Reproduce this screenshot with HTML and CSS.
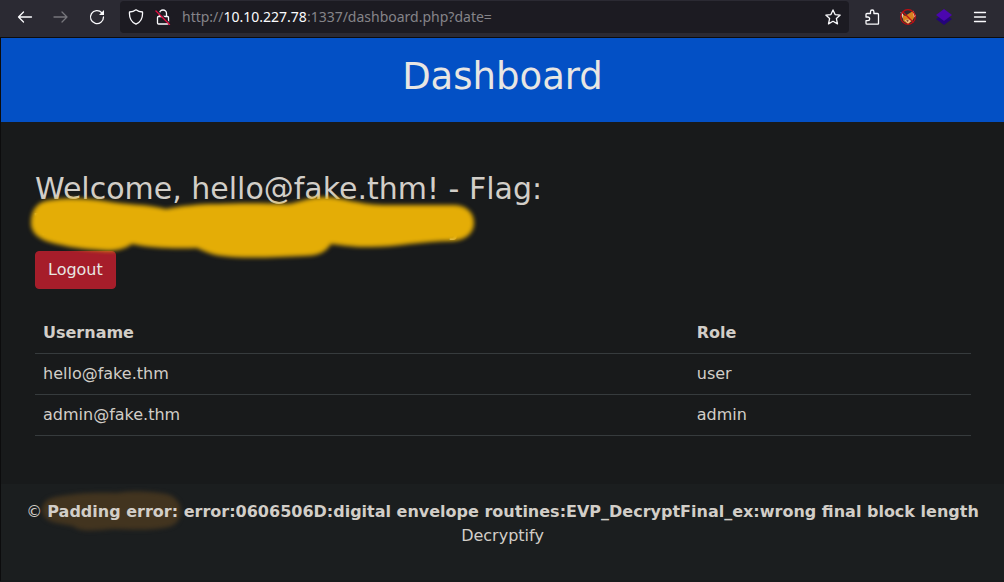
FILE: index.html
```html
<!DOCTYPE html>
<html lang="en">
<head>
<meta charset="utf-8">
<meta name="viewport" content="width=device-width, initial-scale=1">
<title>Dashboard</title>
<link rel="stylesheet" href="styles.css">
</head>
<body>
<nav class="toolbar" aria-label="Browser toolbar">
  <div class="nav-buttons">
    <button class="tool" aria-label="Back"><svg viewBox="0 0 16 16"><path d="M14.500 8H1.500M6.500 3 1.500 8l5 5"/></svg></button>
    <button class="tool dim" aria-label="Forward" disabled><svg viewBox="0 0 16 16"><path d="M1 8h13M9 3l5 5-5 5"/></svg></button>
    <button class="tool" aria-label="Reload"><svg viewBox="0 0 16 16"><path d="M12.800 3.700A6.500 6.500 0 1 0 14.500 8"/><path class="solid" d="M15 1v5H10z"/></svg></button>
  </div>
  <div class="urlbar">
    <button class="tool" aria-label="Tracking protection"><svg viewBox="0 0 16 16"><path d="M8 .8c2 1.600 4.200 2.100 6.500 2.200.4 5.500-1.700 10-6.500 12.200C3.200 13 1.100 8.500 1.500 3 3.800 2.900 6 2.400 8 .8z"/></svg></button>
    <button class="tool" aria-label="Connection is not secure"><svg viewBox="0 0 16 16"><path d="M4.500 7.500V4.500a3.500 3.500 0 0 1 7 0v3M3.500 7.500h9a1 1 0 0 1 1 1v5.500a1 1 0 0 1-1 1h-9a1 1 0 0 1-1-1V8.500a1 1 0 0 1 1-1z"/><path class="mask" d="M2 1.500 15 14.500"/><path class="slash" d="M1 2 14.500 15.500"/></svg></button>
    <div class="address">http://<span class="host">10.10.227.78</span>:1337/dashboard.php?date=</div>
    <button class="tool" aria-label="Bookmark this page"><svg viewBox="0 0 16 16"><path d="m8 .9 2.100 4.700 5.100.5-3.800 3.500 1.100 5.300L8 12.300l-4.500 2.600 1.100-5.300L.8 6.100l5.100-.5z"/></svg></button>
  </div>
  <div class="extensions">
    <button class="tool" aria-label="Extensions"><svg viewBox="0 0 16 16"><path d="M2 8V5.500a1 1 0 0 1 1-1h3.500V2.700a1.700 1.700 0 0 1 3.400 0v1.800H13.500a1 1 0 0 1 1 1v9.200a.5.500 0 0 1-.5.500H3a1 1 0 0 1-1-1v-2.500h1.800a1.800 1.800 0 0 0 0-3.700H2z"/></svg></button>
    <button class="tool" aria-label="FoxyProxy"><svg viewBox="0 0 16 16"><path fill="#d9801f" stroke="none" d="M1.500 4 5 7l4-2.500L13 2l1.800 5-2.300 4.500L8 15l-4.500-3z"/><path fill="#f3e7d8" stroke="none" d="M.5 3 3 5l-.5 4.500zM13 1.500 16 7l-2 1.500z"/><path fill="#efc08a" stroke="none" d="M4.500 11l4-.5 3 1L8 14.800z"/><path fill="#663018" stroke="none" d="M6 11.500 8.500 11 8 13z"/><circle cx="8" cy="8" r="7.300" stroke="#c60c10" stroke-width="1.200"/><path stroke="#b71215" stroke-width="1.200" d="m3 3 10 10"/></svg></button>
    <button class="tool" aria-label="Wappalyzer"><svg viewBox="0 0 16 16"><path fill="#24047b" stroke="none" d="M0 10 8 5l8 5-8 6z"/><path fill="#4b06ae" stroke="none" d="m8 0 8 6-8 6-8-6z"/></svg></button>
    <button class="tool" aria-label="Menu"><svg viewBox="0 0 16 16"><path d="M2.500 3.500h11M2.500 8h11M2.500 12.500h11"/></svg></button>
  </div>
</nav>
<div class="page">
  <header class="banner"><h1>Dashboard</h1></header>
  <main class="content">
    <h2>Welcome, hello@fake.thm! - Flag:
      <span class="flag"><span>T</span><span>}</span>
        <svg class="redaction" viewBox="0 0 460 80" aria-hidden="true"><path fill="#e4ad06" d="M8 31C8 17 15 9 28 8 50 5 67 7 82 9c20 4 43 3 61 8 15-3 31-5 52-5 21-1 43-1 70 0 13-2 20-7 38-7 20 1 35 9 68 8h59c13 0 21 7 21 18 0 10-8 17-21 18-32 0-62 7-88 6-14 0-23-2-34-3-5 8-12 12-27 12-25 1-60 3-82 0-11-1-18-5-25-8-22 1-48 0-65-4-8 6-20 8-34 6-20-1-40-5-52-9-9-4-15-9-15-18z"/></svg>
      </span>
    </h2>
    <button class="logout">Logout</button>
    <table>
      <thead><tr><th scope="col">Username</th><th scope="col">Role</th></tr></thead>
      <tbody>
        <tr><td>hello@fake.thm</td><td>user</td></tr>
        <tr><td>admin@fake.thm</td><td>admin</td></tr>
      </tbody>
    </table>
  </main>
  <footer class="footer">
    <p>© <strong><span class="marked"><svg class="smear" viewBox="0 0 144 44" aria-hidden="true"><path fill="#42341f" d="M16 8C35 4 58 3 78 4c19-3 38-1 49 1 19 4 20 29 2 33-17 4-40 2-57 2-13 1-30 4-38-3C18 34 4 34 3 21 4 12 9 10 16 8z"/></svg><span class="label">Padding error:</span></span> error:0606506D:digital envelope routines:EVP_DecryptFinal_ex:wrong final block length</strong><br>Decryptify</p>
  </footer>
</div>
</body>
</html>
```
FILE: styles.css
```css
* {
  box-sizing: border-box;
}

body {
  margin: 0;
  min-height: 100vh;
  background: #181a1b;
  color: #d2cec8;
  font: 16px/24px "DejaVu Sans", sans-serif;
}

button {
  font: inherit;
  color: inherit;
  cursor: pointer;
}

.toolbar {
  display: flex;
  align-items: center;
  gap: 15px;
  height: 38px;
  padding: 0 16px 3px 17px;
  background: #2b2a33;
  border-bottom: 1px solid #0c0c0d;
}

.nav-buttons,
.extensions {
  display: flex;
  gap: 20px;
}

.tool {
  display: block;
  flex: none;
  width: 16px;
  height: 16px;
  padding: 0;
  border: 0;
  background: none;
  color: #fbfbfe;
}

.tool svg {
  display: block;
  width: 16px;
  height: 16px;
  fill: none;
  stroke: currentColor;
  stroke-width: 1.3;
  stroke-linejoin: round;
  stroke-linecap: round;
}

.dim {
  color: #77767c;
}

.tool .solid {
  fill: currentColor;
  stroke: none;
}

.tool .mask {
  stroke: #1c1b22;
}

.tool .slash {
  stroke: #e80c43;
}

.urlbar {
  flex: 1;
  display: flex;
  align-items: center;
  gap: 11px;
  min-width: 0;
  height: 32px;
  padding: 0 8px;
  border-radius: 4px;
  background: #1c1b22;
}

.address {
  flex: 1;
  overflow: hidden;
  white-space: nowrap;
  color: #858489;
  font: 14px/24px "Noto Sans", sans-serif;
}

.host {
  color: #fbfbfe;
}

.page {
  border-left: 1px solid #0c0c0d;
}

.banner {
  padding: 16px 16px 22px;
  background: #0350c5;
  color: #e8e6e3;
  text-align: center;
}

h1 {
  margin: 0;
  font-size: 37px;
  font-weight: 400;
  line-height: 46px;
}

.content {
  padding: 49px 33px 48px 34px;
}

h2 {
  margin: 0 0 8px;
  font-size: 30px;
  font-weight: 400;
  line-height: 36px;
}

.flag {
  position: relative;
  display: flex;
  justify-content: space-between;
  width: 430px;
  max-width: 100%;
}

.redaction {
  position: absolute;
  left: -12px;
  top: -15px;
  width: 460px;
  height: 80px;
  overflow: visible;
  filter: blur(2px);
}

.logout {
  display: block;
  height: 38px;
  padding: 0 12px;
  border: 1px solid #a51f2b;
  border-radius: 4px;
  background: #a61d2a;
  color: #e8e6e3;
}

table {
  width: 100%;
  margin-top: 24px;
  border-collapse: collapse;
}

th,
td {
  padding: 8px;
  border-bottom: 1px solid #363b3d;
  text-align: left;
}

.footer {
  padding: 16px 0 32px;
  border-bottom: 1px solid #181a1b;
  background: #1b1e1f;
  text-align: center;
}

.footer p {
  margin: 0;
}

.marked,
.label {
  position: relative;
}

.smear {
  position: absolute;
  left: -8px;
  top: -13px;
  width: 144px;
  height: 44px;
  filter: blur(2px);
}
```
